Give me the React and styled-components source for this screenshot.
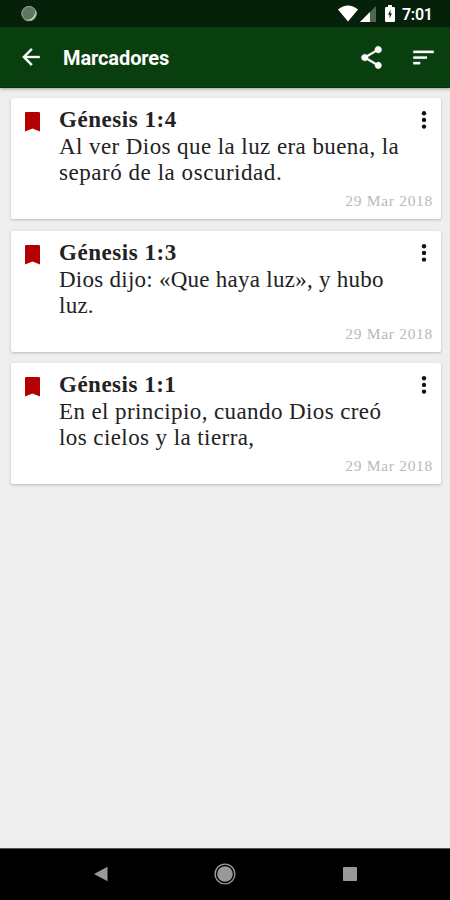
import React from "react";
import styled, { createGlobalStyle } from "styled-components";

const GlobalStyle = createGlobalStyle`
  * { box-sizing: border-box; }
  body { margin: 0; background: #eeeeee; }
`;

const Screen = styled.div`
  display: flex;
  flex-direction: column;
  width: 450px;
  height: 900px;
  overflow: hidden;
  background: #eeeeee;
  font-family: Roboto, sans-serif;
`;

const StatusBar = styled.header`
  flex: none;
  display: flex;
  align-items: center;
  height: 27px;
  padding: 0 17px 0 20px;
  background: #06210a;
  color: #fff;
`;

const StatusIcons = styled.div`
  display: flex;
  align-items: center;
  margin-left: auto;
`;

const Clock = styled.span`
  width: 31px;
  margin-left: 7px;
  font-size: 16px;
  font-weight: 600;
  line-height: 27px;
  letter-spacing: -0.3px;
  padding-top: 1px;
`;

const Toolbar = styled.div`
  flex: none;
  display: flex;
  align-items: center;
  height: 61px;
  padding: 0 13px 0 18px;
  background: #093e0f;
  border-bottom: 1px solid #07300b;
  box-shadow: 0 1px 3px rgba(0, 0, 0, 0.35);
  color: #fff;
`;

const IconButton = styled.button`
  display: flex;
  padding: 0;
  margin-left: ${(p) => p.$gap || 0}px;
  border: 0;
  background: none;
  color: inherit;
`;

const Title = styled.h1`
  flex: 1;
  margin: 2px 0 0 19px;
  font-size: 20px;
  font-weight: 700;
  line-height: 26px;
  letter-spacing: -0.1px;
`;

const CardList = styled.main`
  flex: 1;
  display: flex;
  flex-direction: column;
  gap: 11.5px;
  padding: 10px 9px 0 11px;
`;

const Card = styled.article`
  display: grid;
  grid-template-columns: 48px 1fr 34px;
  height: 121px;
  padding-top: 9px;
  background: #fff;
  border-radius: 2px;
  box-shadow: 0 1px 3px rgba(0, 0, 0, 0.22);
`;

const BookmarkSlot = styled.div`
  padding: 5px 0 0 14px;
`;

const MenuSlot = styled.div`
  padding: 3px 0 0 14px;
`;

const Passage = styled.div`
  font-family: "Liberation Serif", serif;
  color: #222;
  font-size: 23px;
  line-height: 26px;
  white-space: nowrap;
`;

const Reference = styled.h2`
  margin: 0 0 1px;
  font-size: 23px;
  font-weight: 700;
  line-height: 26px;
  letter-spacing: ${(p) => p.$spacing}px;
`;

const Line = styled.div`
  letter-spacing: ${(p) => p.$spacing}px;
`;

const DateLabel = styled.time`
  grid-column: 1 / -1;
  align-self: end;
  justify-self: end;
  padding: 0 8px 9px 0;
  font-family: "Liberation Serif", serif;
  font-size: 15.5px;
  line-height: 18px;
  letter-spacing: 0.7px;
  color: #b9b9b9;
`;

const NavBar = styled.nav`
  flex: none;
  display: flex;
  align-items: center;
  justify-content: space-between;
  height: 52px;
  padding: 0 92px 2px;
  border-top: 1px solid #555;
  background: #000;
`;

const bookmarks = [
  {
    title: "Génesis 1:4", titleSpacing: 0.55,
    lines: [["Al ver Dios que la luz era buena, la", 0.42], ["separó de la oscuridad.", 0.54]],
  },
  {
    title: "Génesis 1:3", titleSpacing: 0.55,
    lines: [["Dios dijo: «Que haya luz», y hubo", 0.26], ["luz.", 0.25]],
  },
  {
    title: "Génesis 1:1", titleSpacing: 0.5,
    lines: [["En el principio, cuando Dios creó", 0.4], ["los cielos y la tierra,", 0.42]],
  },
];

const SpinnerDot = () => (
  <svg width="18" height="18" viewBox="0 0 18 18">
    <circle cx="9" cy="8.6" r="7.6" fill="#607661" />
    <path d="M15.2 4.5A7.5 7.5 0 0 1 4.8 14.8C11.5 15.6 15.8 11.5 15.2 4.5Z" fill="#d3dcd3" />
    <circle cx="9" cy="8.6" r="7.1" fill="none" stroke="#91a392" />
  </svg>
);

const Wifi = () => (
  <svg width="20" height="17" viewBox="0 0 20 17">
    <path d="M0 4.4Q10-3.2 20 4.4L10 16.5Z" fill="#fff" />
  </svg>
);

const Signal = () => (
  <svg width="16" height="16" viewBox="0 0 16 16">
    <path d="M16 0V16H0Z" fill="#526653" />
    <path d="M10 6V16H0Z" fill="#fff" />
  </svg>
);

const Battery = () => (
  <svg width="10" height="17" viewBox="0 0 10 17">
    <path d="M3 0H7V2H8.8Q10 2 10 3.2V15.8Q10 17 8.8 17H1.2Q0 17 0 15.8V3.2Q0 2 1.2 2H3Z" fill="#fff" />
    <path d="M5.5 4.8L3.1 9.8H4.6V13.4L6.9 8.5H5.5Z" fill="#06210a" />
  </svg>
);

const BackArrow = () => (
  <svg width="26" height="26" viewBox="0 0 24 24" fill="currentColor" stroke="currentColor" strokeWidth=".3">
    <path d="M20 11H7.83l5.59-5.59L12 4l-8 8 8 8 1.41-1.41L7.83 13H20v-2z" />
  </svg>
);

const Share = () => (
  <svg width="27" height="27" viewBox="0 0 24 24" fill="currentColor" stroke="currentColor" strokeWidth=".3">
    <path d="M18 16.08c-.76 0-1.44.3-1.96.77L8.91 12.7c.05-.23.09-.46.09-.7s-.04-.47-.09-.7l7.05-4.11c.54.5 1.25.81 2.04.81 1.66 0 3-1.34 3-3s-1.34-3-3-3-3 1.34-3 3c0 .24.04.47.09.7L8.04 9.81C7.5 9.31 6.79 9 6 9c-1.66 0-3 1.34-3 3s1.34 3 3 3c.79 0 1.5-.31 2.04-.81l7.12 4.16c-.05.21-.08.43-.08.65 0 1.61 1.31 2.92 2.92 2.92s2.92-1.31 2.92-2.92-1.31-2.92-2.92-2.92z" />
  </svg>
);

const Sort = () => (
  <svg width="27" height="27" viewBox="0 0 24 24" fill="currentColor" stroke="currentColor" strokeWidth=".3">
    <path d="M3 18h6v-2H3v2zM3 6v2h18V6H3zm0 7h12v-2H3v2z" />
  </svg>
);

const Bookmark = () => (
  <svg width="15" height="20" viewBox="0 0 15 20">
    <path d="M1.2 0H13.8Q15 0 15 1.2V19.4L7.5 16.4L0 19.4V1.2Q0 0 1.2 0Z" fill="#b40000" />
  </svg>
);

const More = () => (
  <svg width="6" height="20" viewBox="0 0 6 20" fill="#111">
    <circle cx="3" cy="3.2" r="2.2" />
    <circle cx="3" cy="9.9" r="2.2" />
    <circle cx="3" cy="16.6" r="2.2" />
  </svg>
);

const NavBack = () => (
  <svg width="16" height="16" viewBox="0 0 16 16"><path d="M2 8L15.5 .8V15.2Z" fill="#999" /></svg>
);

const NavHome = () => (
  <svg width="22" height="22" viewBox="0 0 22 22">
    <circle cx="11" cy="11" r="9.9" fill="none" stroke="#999" strokeWidth="1.4" />
    <circle cx="11" cy="11" r="7.8" fill="#999" />
  </svg>
);

const NavRecent = () => (
  <svg width="16" height="16" viewBox="0 0 16 16"><rect x="1" y="1" width="14" height="14" rx=".7" fill="#999" /></svg>
);

function BookmarkCard({ title, titleSpacing, lines }) {
  return (
    <Card>
      <BookmarkSlot><Bookmark /></BookmarkSlot>
      <Passage>
        <Reference $spacing={titleSpacing}>{title}</Reference>
        {lines.map(([text, spacing]) => <Line key={text} $spacing={spacing}>{text}</Line>)}
      </Passage>
      <MenuSlot><IconButton aria-label="Opciones"><More /></IconButton></MenuSlot>
      <DateLabel>29 Mar 2018</DateLabel>
    </Card>
  );
}

const SignalSlot = styled.span`
  display: flex;
  margin: 1px 9px 0 2px;
`;

export default function App() {
  return (
    <>
      <GlobalStyle />
      <Screen>
        <StatusBar>
          <SpinnerDot />
          <StatusIcons>
            <Wifi />
            <SignalSlot><Signal /></SignalSlot>
            <Battery />
            <Clock>7:01</Clock>
          </StatusIcons>
        </StatusBar>
        <Toolbar>
          <IconButton aria-label="Volver"><BackArrow /></IconButton>
          <Title>Marcadores</Title>
          <IconButton aria-label="Compartir"><Share /></IconButton>
          <IconButton aria-label="Ordenar" $gap={25}><Sort /></IconButton>
        </Toolbar>
        <CardList>
          {bookmarks.map((b) => <BookmarkCard key={b.title} {...b} />)}
        </CardList>
        <NavBar><NavBack /><NavHome /><NavRecent /></NavBar>
      </Screen>
    </>
  );
}
